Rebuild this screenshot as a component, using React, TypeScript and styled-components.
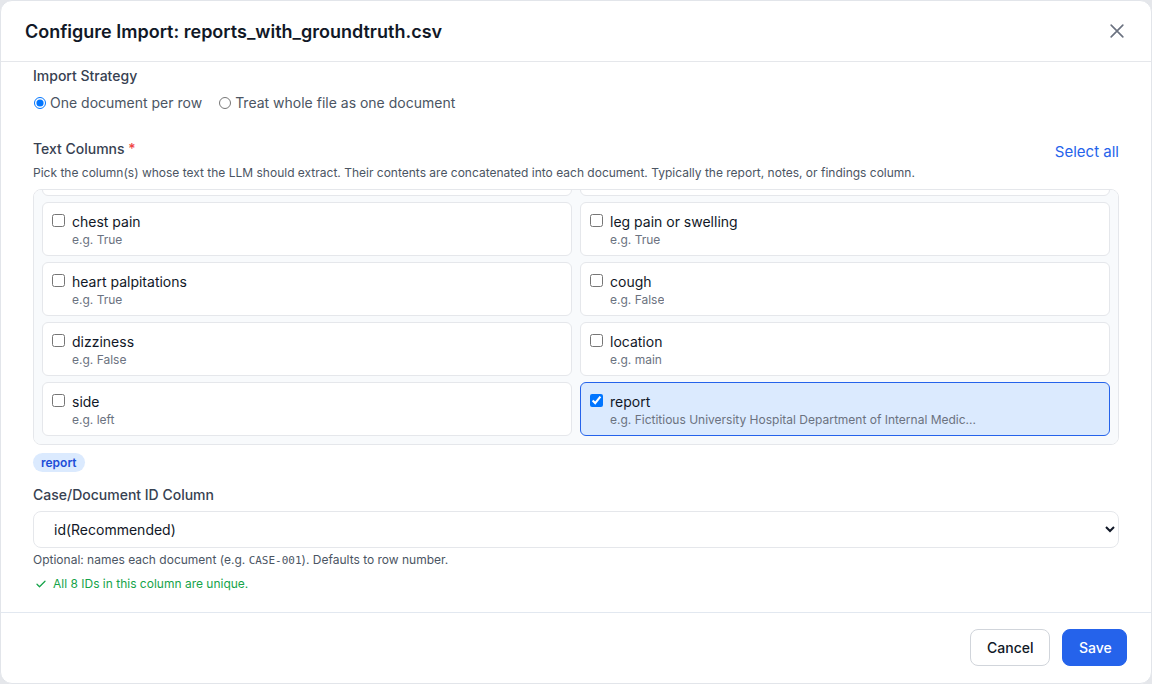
import { useEffect, useRef } from 'react';
import styled, { createGlobalStyle } from 'styled-components';

const GlobalStyle = createGlobalStyle`
  html, body {
    margin: 0;
    padding: 0;
    background: #e5e7eb;
  }
  body {
    font-family: Inter, "Noto Sans", sans-serif;
    color: #111827;
  }
  * {
    box-sizing: border-box;
  }
`;

const Modal = styled.div`
  width: 1152px;
  height: 684px;
  background: #fff;
  border: 1px solid #e2e5ea;
  border-radius: 12px;
  display: flex;
  flex-direction: column;
  overflow: hidden;
`;

const Header = styled.div`
  height: 61px;
  flex-shrink: 0;
  display: flex;
  align-items: center;
  justify-content: space-between;
  padding: 0 24px;
  border-bottom: 1px solid #e5e7eb;
`;

const Title = styled.h2`
  margin: 0;
  font-size: 18px;
  font-weight: 600;
  color: #111827;
`;

const CloseButton = styled.button`
  border: none;
  background: none;
  padding: 0;
  display: flex;
  color: #6b7280;
  cursor: pointer;
`;

const Body = styled.div`
  flex: 1;
  padding: 4px 32px 0 32px;
  display: flex;
  flex-direction: column;
`;

const SectionLabel = styled.div`
  font-size: 14px;
  font-weight: 500;
  color: #374151;
  line-height: 20px;
`;

const RadioRow = styled.div`
  display: flex;
  gap: 16px;
  margin-top: 7px;
`;

const RadioOption = styled.label`
  display: flex;
  align-items: center;
  gap: 4px;
  font-size: 14px;
  color: #4b5563;
  line-height: 20px;

  input {
    margin: 0 0 0 1px;
    width: 12px;
    height: 12px;
  }
`;

const FieldHead = styled.div`
  margin-top: 26px;
  display: flex;
  justify-content: space-between;
  align-items: flex-end;
`;

const Required = styled.span`
  color: #ef4444;
`;

const LinkButton = styled.button`
  border: none;
  background: none;
  padding: 0;
  font-family: inherit;
  font-size: 15px;
  color: #2563eb;
  cursor: pointer;
  line-height: 20px;
  margin-bottom: -3px;
`;

const Hint = styled.div<{ $tone?: 'muted' | 'success' }>`
  font-size: 12px;
  line-height: 16px;
  color: ${(p) => (p.$tone === 'success' ? '#16a34a' : '#4b5563')};
  display: flex;
  align-items: center;
  gap: 6px;
`;

const Mono = styled.code`
  font-family: "DejaVu Sans Mono", "Liberation Mono", monospace;
  font-size: 11px;
`;

const ColumnsBox = styled.div`
  margin-top: 8px;
  height: 256px;
  overflow-y: auto;
  background: #f8fafc;
  border: 1px solid #e5e7eb;
  border-radius: 8px;
  padding: 0 8px 8px 8px;
  scrollbar-width: none;
  &::-webkit-scrollbar {
    display: none;
  }
`;

const ColumnsGrid = styled.div`
  display: grid;
  grid-template-columns: 1fr 1fr;
  gap: 6px 8px;
  padding-top: 8px;
`;

const ColumnCard = styled.label<{ $checked?: boolean }>`
  display: flex;
  align-items: flex-start;
  gap: 7px;
  height: 54px;
  padding: 9px 9px;
  border-radius: 6px;
  border: 1px solid ${(p) => (p.$checked ? '#2563eb' : '#e5e7eb')};
  background: ${(p) => (p.$checked ? '#dbeafe' : '#fff')};
  cursor: pointer;

  input {
    margin: 2px 0 0 0;
    width: 13px;
    height: 13px;
    flex-shrink: 0;
  }
`;

const ColumnText = styled.div`
  display: flex;
  flex-direction: column;
  min-width: 0;
`;

const ColumnName = styled.div`
  font-size: 14px;
  line-height: 20px;
  color: #111827;
`;

const ColumnExample = styled.div`
  font-size: 12px;
  line-height: 16px;
  color: #6b7280;
  white-space: nowrap;
  overflow: hidden;
  text-overflow: ellipsis;
`;

const Chips = styled.div`
  display: flex;
  gap: 6px;
  margin-top: 8px;
`;

const Chip = styled.span`
  background: #dbeafe;
  color: #1d4ed8;
  font-size: 12px;
  font-weight: 600;
  line-height: 19px;
  padding: 0 8px;
  border-radius: 9999px;
`;

const IdLabel = styled(SectionLabel)`
  margin-top: 13px;
`;

const Select = styled.select`
  margin-top: 6px;
  height: 37px;
  width: 100%;
  padding: 0 12px 0 16px;
  font-family: inherit;
  font-size: 14px;
  color: #111827;
  background: #fff;
  border: 1px solid #e5e7eb;
  border-radius: 8px;
`;

const HelpGap = styled.div<{ $h: number }>`
  height: ${(p) => p.$h}px;
`;

const Footer = styled.div`
  height: 71px;
  flex-shrink: 0;
  border-top: 1px solid #e2e8f0;
  display: flex;
  justify-content: flex-end;
  align-items: center;
  gap: 12px;
  padding: 0 24px 2px 24px;
`;

const Button = styled.button<{ $primary?: boolean }>`
  height: 37px;
  padding: 0 16px;
  border-radius: 8px;
  font-family: inherit;
  font-size: 14px;
  font-weight: 500;
  cursor: pointer;
  border: 1px solid ${(p) => (p.$primary ? '#2563eb' : '#d1d5db')};
  background: ${(p) => (p.$primary ? '#2563eb' : '#fff')};
  color: ${(p) => (p.$primary ? '#fff' : '#111827')};
  width: ${(p) => (p.$primary ? '65px' : '80px')};
`;

const columns: { name: string; example: string; checked?: boolean }[] = [
  { name: 'shortness of breath', example: 'e.g. True' },
  { name: 'fever', example: 'e.g. False' },
  { name: 'chest pain', example: 'e.g. True' },
  { name: 'leg pain or swelling', example: 'e.g. True' },
  { name: 'heart palpitations', example: 'e.g. True' },
  { name: 'cough', example: 'e.g. False' },
  { name: 'dizziness', example: 'e.g. False' },
  { name: 'location', example: 'e.g. main' },
  { name: 'side', example: 'e.g. left' },
  {
    name: 'report',
    example: 'e.g. Fictitious University Hospital Department of Internal Medic...',
    checked: true,
  },
];

export default function App() {
  const boxRef = useRef<HTMLDivElement>(null);

  useEffect(() => {
    if (boxRef.current) boxRef.current.scrollTop = boxRef.current.scrollHeight;
  }, []);

  return (
    <>
      <GlobalStyle />
      <Modal>
        <Header>
          <Title>Configure Import: reports_with_groundtruth.csv</Title>
          <CloseButton aria-label="Close">
            <svg width="20" height="20" viewBox="0 0 24 24" fill="none" stroke="currentColor" strokeWidth="2" strokeLinecap="round">
              <path d="M5 5l14 14M19 5L5 19" />
            </svg>
          </CloseButton>
        </Header>
        <Body>
          <SectionLabel>Import Strategy</SectionLabel>
          <RadioRow>
            <RadioOption>
              <input type="radio" name="strategy" defaultChecked />
              One document per row
            </RadioOption>
            <RadioOption>
              <input type="radio" name="strategy" />
              Treat whole file as one document
            </RadioOption>
          </RadioRow>

          <FieldHead>
            <SectionLabel>
              Text Columns <Required>*</Required>
            </SectionLabel>
            <LinkButton>Select all</LinkButton>
          </FieldHead>
          <HelpGap $h={6} />
          <Hint>
            Pick the column(s) whose text the LLM should extract. Their contents are concatenated into each document. Typically the report, notes, or findings column.
          </Hint>
          <ColumnsBox ref={boxRef}>
            <ColumnsGrid>
              {columns.map((c) => (
                <ColumnCard key={c.name} $checked={c.checked}>
                  <input type="checkbox" defaultChecked={c.checked} />
                  <ColumnText>
                    <ColumnName>{c.name}</ColumnName>
                    <ColumnExample>{c.example}</ColumnExample>
                  </ColumnText>
                </ColumnCard>
              ))}
            </ColumnsGrid>
          </ColumnsBox>
          <Chips>
            <Chip>report</Chip>
          </Chips>

          <IdLabel>Case/Document ID Column</IdLabel>
          <Select defaultValue="id">
            <option value="id">id(Recommended)</option>
            <option value="">Row number</option>
          </Select>
          <HelpGap $h={4} />
          <Hint>
            <span>
              Optional: names each document (e.g. <Mono>CASE-001</Mono>). Defaults to row number.
            </span>
          </Hint>
          <HelpGap $h={7} />
          <Hint $tone="success">
            <svg width="12" height="12" viewBox="0 0 24 24" fill="none" stroke="currentColor" strokeWidth="2.5" strokeLinecap="round" strokeLinejoin="round" style={{ marginLeft: 2 }}>
              <path d="M4 12.5l5 5L20 6.5" />
            </svg>
            All 8 IDs in this column are unique.
          </Hint>
        </Body>
        <Footer>
          <Button>Cancel</Button>
          <Button $primary>Save</Button>
        </Footer>
      </Modal>
    </>
  );
}
